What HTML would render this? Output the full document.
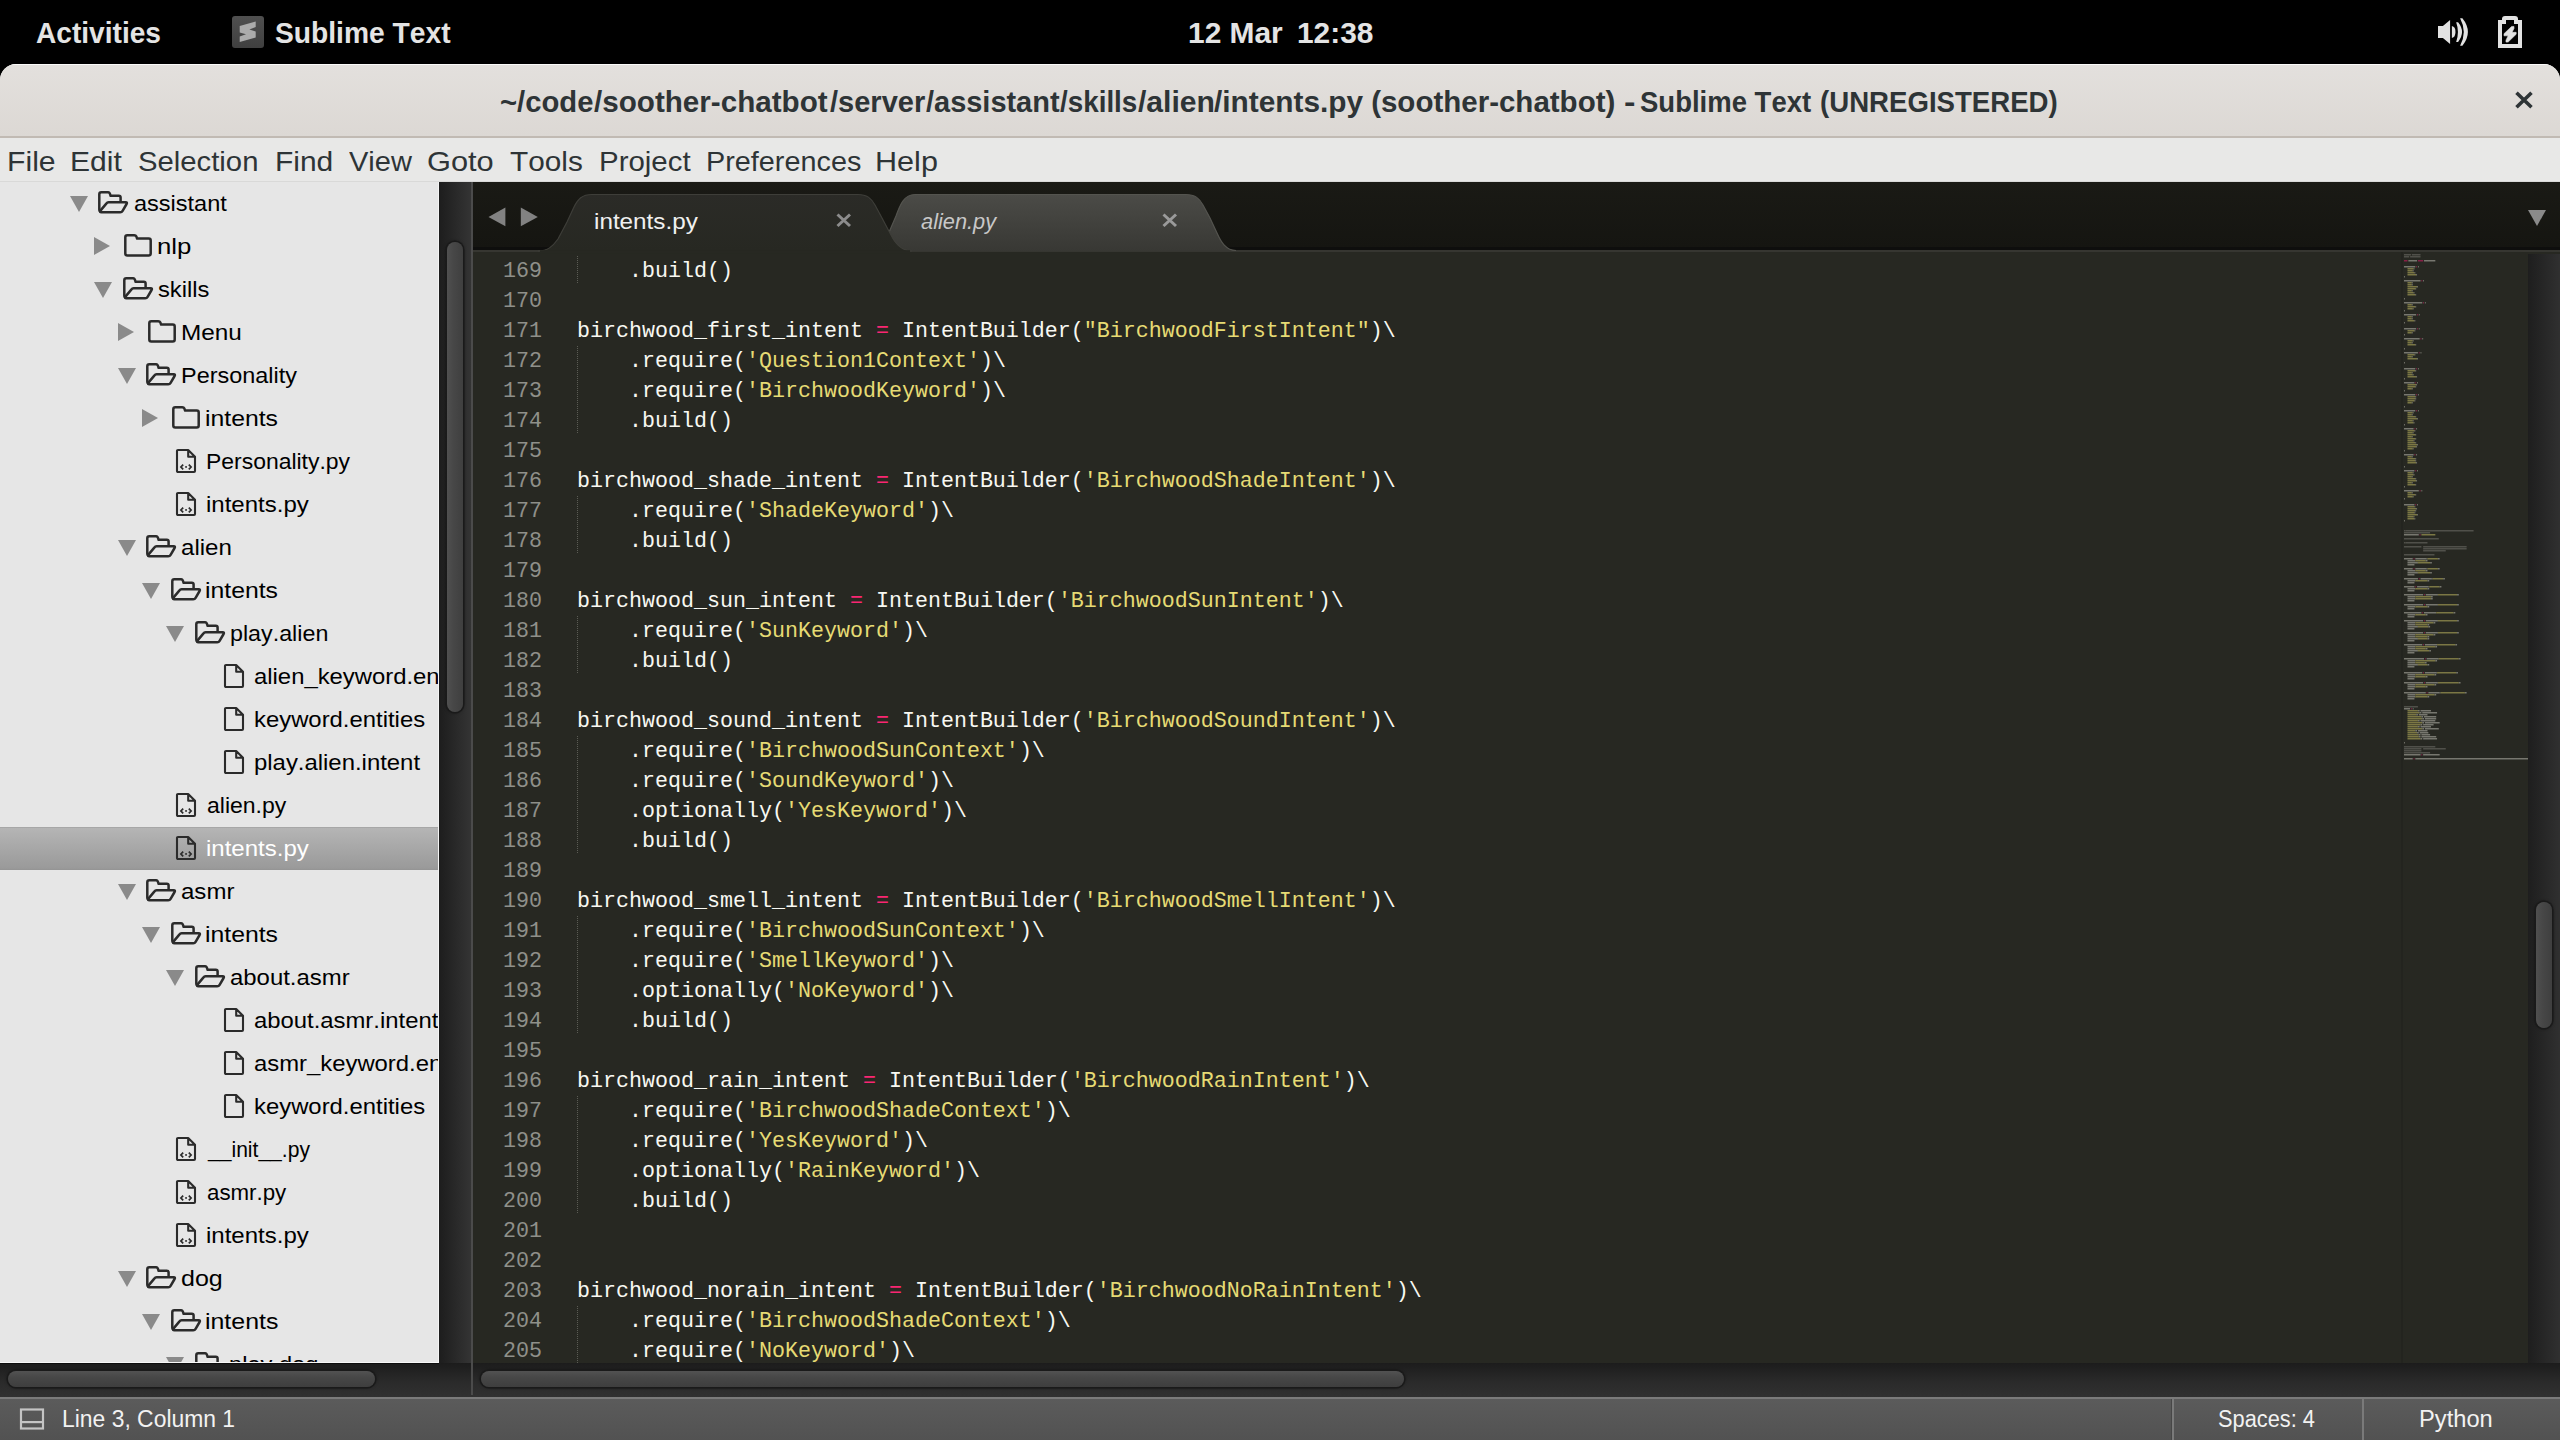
<!DOCTYPE html><html><head><meta charset="utf-8"><title>Sublime Text</title><style>

*{margin:0;padding:0;box-sizing:border-box}
html,body{width:2560px;height:1440px;overflow:hidden;background:#000}
body{position:relative;font-family:"Liberation Sans",sans-serif;font-kerning:none}
.t{position:absolute;white-space:pre;line-height:1;transform-origin:0 0;font-kerning:none}
.abs{position:absolute}
svg{position:absolute;overflow:visible}
#win{position:absolute;left:0;top:64px;width:2560px;height:1376px;border-radius:16px 16px 0 0;overflow:hidden;background:#e8e8e7}
#titlebar{position:absolute;left:0;top:0;width:2560px;height:72px;background:linear-gradient(#e3e0dd,#dcd8d4);border-top:1px solid #fbfaf9}
#tbline{position:absolute;left:0;top:72px;width:2560px;height:2px;background:#c1bab3}
#menubar{position:absolute;left:0;top:74px;width:2560px;height:44px;background:#e8e8e7;border-bottom:1px solid #d9d9d8}
#sidebar{position:absolute;left:0;top:182px;width:439px;height:1181px;background:#e6e6e6;overflow:hidden;border-right:1px solid #f4f4f4;border-bottom:1px solid #f8f8f8}
#sbcol{position:absolute;left:439px;top:182px;width:32px;height:1181px;background:linear-gradient(90deg,#1d1d1d,#262626 40%,#343434)}
#sep1{position:absolute;left:471px;top:182px;width:2px;height:1213px;background:#4b4b4b}
.thumbv{position:absolute;border-radius:8px;background:linear-gradient(90deg,#505050,#474747 40%,#3f3f3f);box-shadow:0 0 0 1.5px #1a1a1a,0 0 3px 1px rgba(0,0,0,.5)}
.thumbh{position:absolute;border-radius:8px;background:linear-gradient(#525252,#474747 40%,#3e3e3e);box-shadow:0 0 0 1.5px #1a1a1a,0 0 3px 1px rgba(0,0,0,.5)}
#tabbar{position:absolute;left:473px;top:182px;width:2087px;height:66px;background:linear-gradient(#1a1a15,#151511)}
#tabline1{position:absolute;left:473px;top:247px;width:2087px;height:3px;background:#0e0e0d}
#tabline2{position:absolute;left:473px;top:250px;width:2087px;height:2px;background:#363631}
#code{position:absolute;left:473px;top:252px;width:2087px;height:1111px;background:#272822;overflow:hidden}
#mmsep{position:absolute;left:2401px;top:252px;width:2px;height:1111px;background:#23241f}
#vscol{position:absolute;left:2528px;top:254px;width:32px;height:1109px;background:linear-gradient(90deg,#1e1e1e,#252525 40%,#303030)}
#bottom{position:absolute;left:0;top:1363px;width:2560px;height:34px;background:linear-gradient(#1c1c1c,#212121 20%,#2a2a2a 55%,#313131)}
#status{position:absolute;left:0;top:1397px;width:2560px;height:43px;background:linear-gradient(#7b7b7b,#7b7b7b 2px,#5b5b5b 2px,#525252)}
.ln{position:absolute;left:474px;width:67px;text-align:right;white-space:pre;font-family:"Liberation Mono",monospace;font-size:21.667px;line-height:1;color:#8f908a;transform:scaleY(1.05);transform-origin:0 16px}
.cl{position:absolute;left:577px;white-space:pre;font-family:"Liberation Mono",monospace;font-size:21.667px;line-height:1;color:#f8f8f2;transform:scaleY(1.05);transform-origin:0 16px}
.s{color:#e6db74}.o{color:#f92672}
.ig{position:absolute;left:577px;width:1px;background:repeating-linear-gradient(#5b5c55 0 1px,transparent 1px 2px)}

</style></head><body>
<svg style="left:232px;top:16px" width="32" height="32" viewBox="0 0 32 32"><defs><linearGradient id="ig1" x1="0" y1="0" x2="0" y2="1"><stop offset="0" stop-color="#505050"/><stop offset="1" stop-color="#404040"/></linearGradient></defs><rect x="0" y="0" width="32" height="32" rx="3" fill="url(#ig1)"/><path d="M7.7 9.9 L23.7 5.6 L23.7 11.1 L17.4 13.5 L23.7 15.4 L23.7 21.6 L7.7 26.1 L7.7 20.4 L14 18.2 L7.7 16.6 Z" fill="#ababab"/></svg>
<svg style="left:2436px;top:16px" width="34" height="32" viewBox="0 0 34 32"><path d="M2 10.06 H6.9 L14.1 4 V28 L6.9 21.98 H2 Z" fill="#e2e2e2"/><path d="M15.9 10.1 A4.1 6 0 0 1 15.9 22 Z" fill="#e2e2e2"/><path d="M20.17 6.35 L22.1 6.35 Q29.96 16.1 22.1 25.9 L20.17 25.9 Q23.7 16.1 20.17 6.35 Z" fill="#e2e2e2"/><path d="M24.1 2.25 L26.4 2.25 Q37.4 16 26.4 29.8 L24.1 29.8 Q31.5 16 24.1 2.25 Z" fill="#e2e2e2"/></svg>
<svg style="left:2496px;top:14px" width="28" height="36" viewBox="0 0 28 36"><path d="M4 8 H8 V5 Q8 4 9 4 H19 Q20 4 20 5 V8 H24 V32 H4 Z" stroke="#e2e2e2" stroke-width="4" fill="none" stroke-linejoin="miter"/><path d="M15.64 12.45 L17.98 12.45 L17.98 14.6 L16.03 18.3 L20.13 18.3 L20.13 20.27 L12.13 28.08 L9.98 28.08 L9.98 26.13 L12.13 21.83 L8.02 21.83 L8.02 19.68 Z" fill="#e2e2e2" stroke="#e2e2e2" stroke-width="0.6" stroke-linejoin="round"/></svg>
<span class="t" style="left:35.50px;top:18.00px;font-family:'Liberation Sans';font-weight:bold;font-size:30px;color:#e4e4e4;transform:scaleX(0.9368);">Activities</span>
<span class="t" style="left:275.19px;top:18.00px;font-family:'Liberation Sans';font-weight:bold;font-size:30px;color:#e4e4e4;transform:scaleX(0.9403);">Sublime Text</span>
<span class="t" style="left:1187.62px;top:18.00px;font-family:'Liberation Sans';font-weight:bold;font-size:30px;color:#e4e4e4;transform:scaleX(0.9967);">12 Mar</span>
<span class="t" style="left:1296.82px;top:18.00px;font-family:'Liberation Sans';font-weight:bold;font-size:30px;color:#e4e4e4;transform:scaleX(0.9957);">12:38</span>
<div id="win"><div id="titlebar"></div><div id="tbline"></div><div id="menubar"></div></div>
<span class="t" style="left:499.94px;top:87.00px;font-family:'Liberation Sans';font-weight:bold;font-size:29.5px;color:#2e3436;transform:scaleX(0.9913);">~/code</span>
<span class="t" style="left:593.61px;top:87.00px;font-family:'Liberation Sans';font-weight:bold;font-size:29.5px;color:#2e3436;transform:scaleX(1.0040);">/soother-chatbot</span>
<span class="t" style="left:829.62px;top:87.00px;font-family:'Liberation Sans';font-weight:bold;font-size:29.5px;color:#2e3436;transform:scaleX(0.9839);">/server</span>
<span class="t" style="left:926.22px;top:87.00px;font-family:'Liberation Sans';font-weight:bold;font-size:29.5px;color:#2e3436;transform:scaleX(0.9812);">/assistant</span>
<span class="t" style="left:1060.13px;top:87.00px;font-family:'Liberation Sans';font-weight:bold;font-size:29.5px;color:#2e3436;transform:scaleX(0.9428);">/skills</span>
<span class="t" style="left:1138.21px;top:87.00px;font-family:'Liberation Sans';font-weight:bold;font-size:29.5px;color:#2e3436;transform:scaleX(1.0204);">/alien</span>
<span class="t" style="left:1214.11px;top:87.00px;font-family:'Liberation Sans';font-weight:bold;font-size:29.5px;color:#2e3436;transform:scaleX(1.0111);">/intents.py</span>
<span class="t" style="left:1371.13px;top:87.00px;font-family:'Liberation Sans';font-weight:bold;font-size:29.5px;color:#2e3436;">(soother-chatbot)</span>
<span class="t" style="left:1623.65px;top:87.00px;font-family:'Liberation Sans';font-weight:bold;font-size:29.5px;color:#2e3436;transform:scaleX(1.1682);">-</span>
<span class="t" style="left:1640.46px;top:87.00px;font-family:'Liberation Sans';font-weight:bold;font-size:29.5px;color:#2e3436;transform:scaleX(0.9321);">Sublime Text</span>
<span class="t" style="left:1819.62px;top:87.00px;font-family:'Liberation Sans';font-weight:bold;font-size:29.5px;color:#2e3436;transform:scaleX(0.9359);">(UNREGISTERED)</span>
<svg style="left:2512px;top:88px" width="24" height="24" viewBox="0 0 24 24"><path d="M4.5 4.8 L19.5 19.2 M19.5 4.8 L4.5 19.2" stroke="#2e3436" stroke-width="3.6"/></svg>
<span class="t" style="left:7.13px;top:147.60px;font-family:'Liberation Sans';font-size:28px;color:#2e3436;transform:scaleX(1.0775);">File</span>
<span class="t" style="left:70.33px;top:147.60px;font-family:'Liberation Sans';font-size:28px;color:#2e3436;transform:scaleX(1.0733);">Edit</span>
<span class="t" style="left:138.37px;top:147.60px;font-family:'Liberation Sans';font-size:28px;color:#2e3436;transform:scaleX(1.0455);">Selection</span>
<span class="t" style="left:274.64px;top:147.60px;font-family:'Liberation Sans';font-size:28px;color:#2e3436;transform:scaleX(1.0701);">Find</span>
<span class="t" style="left:348.67px;top:147.60px;font-family:'Liberation Sans';font-size:28px;color:#2e3436;transform:scaleX(1.0357);">View</span>
<span class="t" style="left:427.35px;top:147.60px;font-family:'Liberation Sans';font-size:28px;color:#2e3436;transform:scaleX(1.0995);">Goto</span>
<span class="t" style="left:509.63px;top:147.60px;font-family:'Liberation Sans';font-size:28px;color:#2e3436;transform:scaleX(1.0639);">Tools</span>
<span class="t" style="left:598.58px;top:147.60px;font-family:'Liberation Sans';font-size:28px;color:#2e3436;transform:scaleX(1.0515);">Project</span>
<span class="t" style="left:705.54px;top:147.60px;font-family:'Liberation Sans';font-size:28px;color:#2e3436;transform:scaleX(1.0287);">Preferences</span>
<span class="t" style="left:875.19px;top:147.60px;font-family:'Liberation Sans';font-size:28px;color:#2e3436;transform:scaleX(1.0922);">Help</span>
<div id="sidebar"><div class="abs" style="left:0;top:-182px;width:439px;height:1440px">
<div class="abs" style="left:0;top:827px;width:439px;height:43px;background:linear-gradient(#a7a7a7,#a7a7a7 1px,#b5b5b5 1px,#9a9a9a 41px,#939393)"></div>
<svg style="left:69.5px;top:195.5px" width="18" height="16" viewBox="0 0 18 16"><path d="M0 0 H18 L9 16 Z" fill="#8a8a8a"/></svg>
<svg style="left:98.2px;top:190.8px" width="31" height="23" viewBox="0 0 31 23"><path d="M3.5 20.6 Q1.3 20.6 1.3 18.5 V3.2 Q1.3 1.2 3.3 1.2 H10.2 Q11.3 1.2 11.8 2.4 L12.6 4.8 H20.8 Q22.6 4.8 22.6 6.6 V11" stroke="#2b2b2b" stroke-width="2.5" fill="none" stroke-linejoin="round"/><path d="M10.6 11.2 H27.6 Q29.6 11.2 28.6 13 L24.6 19.8 Q23.8 21.3 22.2 21.3 H3.4 Q1.4 21.3 2.4 19.6 L8.3 12.6 Q9.2 11.2 10.6 11.2 Z" stroke="#2b2b2b" stroke-width="2.5" fill="none" stroke-linejoin="round"/></svg>
<svg style="left:93.9px;top:237px" width="16" height="18" viewBox="0 0 16 18"><path d="M0 0 V18 L16 9 Z" fill="#8a8a8a"/></svg>
<svg style="left:123.9px;top:233.7px" width="28" height="23" viewBox="0 0 28 23"><path d="M1.3 3.2 Q1.3 1.2 3.3 1.2 H10.2 Q11.8 1.2 12.4 2.6 L13.1 4.6 H24.7 Q26.7 4.6 26.7 6.6 V19.4 Q26.7 21.4 24.7 21.4 H3.3 Q1.3 21.4 1.3 19.4 Z" stroke="#2b2b2b" stroke-width="2.5" fill="none" stroke-linejoin="round"/></svg>
<svg style="left:93.9px;top:281.5px" width="18" height="16" viewBox="0 0 18 16"><path d="M0 0 H18 L9 16 Z" fill="#8a8a8a"/></svg>
<svg style="left:122.6px;top:276.8px" width="31" height="23" viewBox="0 0 31 23"><path d="M3.5 20.6 Q1.3 20.6 1.3 18.5 V3.2 Q1.3 1.2 3.3 1.2 H10.2 Q11.3 1.2 11.8 2.4 L12.6 4.8 H20.8 Q22.6 4.8 22.6 6.6 V11" stroke="#2b2b2b" stroke-width="2.5" fill="none" stroke-linejoin="round"/><path d="M10.6 11.2 H27.6 Q29.6 11.2 28.6 13 L24.6 19.8 Q23.8 21.3 22.2 21.3 H3.4 Q1.4 21.3 2.4 19.6 L8.3 12.6 Q9.2 11.2 10.6 11.2 Z" stroke="#2b2b2b" stroke-width="2.5" fill="none" stroke-linejoin="round"/></svg>
<svg style="left:118.3px;top:323px" width="16" height="18" viewBox="0 0 16 18"><path d="M0 0 V18 L16 9 Z" fill="#8a8a8a"/></svg>
<svg style="left:148.3px;top:319.7px" width="28" height="23" viewBox="0 0 28 23"><path d="M1.3 3.2 Q1.3 1.2 3.3 1.2 H10.2 Q11.8 1.2 12.4 2.6 L13.1 4.6 H24.7 Q26.7 4.6 26.7 6.6 V19.4 Q26.7 21.4 24.7 21.4 H3.3 Q1.3 21.4 1.3 19.4 Z" stroke="#2b2b2b" stroke-width="2.5" fill="none" stroke-linejoin="round"/></svg>
<svg style="left:117.5px;top:367.5px" width="18" height="16" viewBox="0 0 18 16"><path d="M0 0 H18 L9 16 Z" fill="#8a8a8a"/></svg>
<svg style="left:146.2px;top:362.8px" width="31" height="23" viewBox="0 0 31 23"><path d="M3.5 20.6 Q1.3 20.6 1.3 18.5 V3.2 Q1.3 1.2 3.3 1.2 H10.2 Q11.3 1.2 11.8 2.4 L12.6 4.8 H20.8 Q22.6 4.8 22.6 6.6 V11" stroke="#2b2b2b" stroke-width="2.5" fill="none" stroke-linejoin="round"/><path d="M10.6 11.2 H27.6 Q29.6 11.2 28.6 13 L24.6 19.8 Q23.8 21.3 22.2 21.3 H3.4 Q1.4 21.3 2.4 19.6 L8.3 12.6 Q9.2 11.2 10.6 11.2 Z" stroke="#2b2b2b" stroke-width="2.5" fill="none" stroke-linejoin="round"/></svg>
<svg style="left:142.0px;top:409px" width="16" height="18" viewBox="0 0 16 18"><path d="M0 0 V18 L16 9 Z" fill="#8a8a8a"/></svg>
<svg style="left:172.0px;top:405.7px" width="28" height="23" viewBox="0 0 28 23"><path d="M1.3 3.2 Q1.3 1.2 3.3 1.2 H10.2 Q11.8 1.2 12.4 2.6 L13.1 4.6 H24.7 Q26.7 4.6 26.7 6.6 V19.4 Q26.7 21.4 24.7 21.4 H3.3 Q1.3 21.4 1.3 19.4 Z" stroke="#2b2b2b" stroke-width="2.5" fill="none" stroke-linejoin="round"/></svg>
<svg style="left:175.3px;top:448px" width="22" height="26" viewBox="0 0 22 26"><path d="M2 3 Q2 2 3 2 H13.2 L20 8.8 V23 Q20 24 19 24 H3 Q2 24 2 23 Z M13.2 2 V8.8 H20" stroke="#2b2b2b" stroke-width="2.1" fill="none" stroke-linejoin="round"/><path d="M8.2 16.6 L5.9 19 L8.2 21.4 M13.8 16.6 L16.1 19 L13.8 21.4" stroke="#2b2b2b" stroke-width="1.7" fill="none"/><rect x="10.2" y="18.1" width="1.7" height="1.7" fill="#2b2b2b"/></svg>
<svg style="left:175.1px;top:491px" width="22" height="26" viewBox="0 0 22 26"><path d="M2 3 Q2 2 3 2 H13.2 L20 8.8 V23 Q20 24 19 24 H3 Q2 24 2 23 Z M13.2 2 V8.8 H20" stroke="#2b2b2b" stroke-width="2.1" fill="none" stroke-linejoin="round"/><path d="M8.2 16.6 L5.9 19 L8.2 21.4 M13.8 16.6 L16.1 19 L13.8 21.4" stroke="#2b2b2b" stroke-width="1.7" fill="none"/><rect x="10.2" y="18.1" width="1.7" height="1.7" fill="#2b2b2b"/></svg>
<svg style="left:117.5px;top:539.5px" width="18" height="16" viewBox="0 0 18 16"><path d="M0 0 H18 L9 16 Z" fill="#8a8a8a"/></svg>
<svg style="left:146.2px;top:534.8px" width="31" height="23" viewBox="0 0 31 23"><path d="M3.5 20.6 Q1.3 20.6 1.3 18.5 V3.2 Q1.3 1.2 3.3 1.2 H10.2 Q11.3 1.2 11.8 2.4 L12.6 4.8 H20.8 Q22.6 4.8 22.6 6.6 V11" stroke="#2b2b2b" stroke-width="2.5" fill="none" stroke-linejoin="round"/><path d="M10.6 11.2 H27.6 Q29.6 11.2 28.6 13 L24.6 19.8 Q23.8 21.3 22.2 21.3 H3.4 Q1.4 21.3 2.4 19.6 L8.3 12.6 Q9.2 11.2 10.6 11.2 Z" stroke="#2b2b2b" stroke-width="2.5" fill="none" stroke-linejoin="round"/></svg>
<svg style="left:142.0px;top:582.5px" width="18" height="16" viewBox="0 0 18 16"><path d="M0 0 H18 L9 16 Z" fill="#8a8a8a"/></svg>
<svg style="left:170.7px;top:577.8px" width="31" height="23" viewBox="0 0 31 23"><path d="M3.5 20.6 Q1.3 20.6 1.3 18.5 V3.2 Q1.3 1.2 3.3 1.2 H10.2 Q11.3 1.2 11.8 2.4 L12.6 4.8 H20.8 Q22.6 4.8 22.6 6.6 V11" stroke="#2b2b2b" stroke-width="2.5" fill="none" stroke-linejoin="round"/><path d="M10.6 11.2 H27.6 Q29.6 11.2 28.6 13 L24.6 19.8 Q23.8 21.3 22.2 21.3 H3.4 Q1.4 21.3 2.4 19.6 L8.3 12.6 Q9.2 11.2 10.6 11.2 Z" stroke="#2b2b2b" stroke-width="2.5" fill="none" stroke-linejoin="round"/></svg>
<svg style="left:166.0px;top:625.5px" width="18" height="16" viewBox="0 0 18 16"><path d="M0 0 H18 L9 16 Z" fill="#8a8a8a"/></svg>
<svg style="left:194.7px;top:620.8px" width="31" height="23" viewBox="0 0 31 23"><path d="M3.5 20.6 Q1.3 20.6 1.3 18.5 V3.2 Q1.3 1.2 3.3 1.2 H10.2 Q11.3 1.2 11.8 2.4 L12.6 4.8 H20.8 Q22.6 4.8 22.6 6.6 V11" stroke="#2b2b2b" stroke-width="2.5" fill="none" stroke-linejoin="round"/><path d="M10.6 11.2 H27.6 Q29.6 11.2 28.6 13 L24.6 19.8 Q23.8 21.3 22.2 21.3 H3.4 Q1.4 21.3 2.4 19.6 L8.3 12.6 Q9.2 11.2 10.6 11.2 Z" stroke="#2b2b2b" stroke-width="2.5" fill="none" stroke-linejoin="round"/></svg>
<svg style="left:222.8px;top:663px" width="22" height="26" viewBox="0 0 22 26"><path d="M2 3 Q2 2 3 2 H13.2 L20 8.8 V23 Q20 24 19 24 H3 Q2 24 2 23 Z M13.2 2 V8.8 H20" stroke="#2b2b2b" stroke-width="2.1" fill="none" stroke-linejoin="round"/></svg>
<svg style="left:222.8px;top:706px" width="22" height="26" viewBox="0 0 22 26"><path d="M2 3 Q2 2 3 2 H13.2 L20 8.8 V23 Q20 24 19 24 H3 Q2 24 2 23 Z M13.2 2 V8.8 H20" stroke="#2b2b2b" stroke-width="2.1" fill="none" stroke-linejoin="round"/></svg>
<svg style="left:222.8px;top:749px" width="22" height="26" viewBox="0 0 22 26"><path d="M2 3 Q2 2 3 2 H13.2 L20 8.8 V23 Q20 24 19 24 H3 Q2 24 2 23 Z M13.2 2 V8.8 H20" stroke="#2b2b2b" stroke-width="2.1" fill="none" stroke-linejoin="round"/></svg>
<svg style="left:175.1px;top:792px" width="22" height="26" viewBox="0 0 22 26"><path d="M2 3 Q2 2 3 2 H13.2 L20 8.8 V23 Q20 24 19 24 H3 Q2 24 2 23 Z M13.2 2 V8.8 H20" stroke="#2b2b2b" stroke-width="2.1" fill="none" stroke-linejoin="round"/><path d="M8.2 16.6 L5.9 19 L8.2 21.4 M13.8 16.6 L16.1 19 L13.8 21.4" stroke="#2b2b2b" stroke-width="1.7" fill="none"/><rect x="10.2" y="18.1" width="1.7" height="1.7" fill="#2b2b2b"/></svg>
<svg style="left:175.1px;top:835px" width="22" height="26" viewBox="0 0 22 26"><path d="M2 3 Q2 2 3 2 H13.2 L20 8.8 V23 Q20 24 19 24 H3 Q2 24 2 23 Z M13.2 2 V8.8 H20" stroke="#2b2b2b" stroke-width="2.1" fill="none" stroke-linejoin="round"/><path d="M8.2 16.6 L5.9 19 L8.2 21.4 M13.8 16.6 L16.1 19 L13.8 21.4" stroke="#2b2b2b" stroke-width="1.7" fill="none"/><rect x="10.2" y="18.1" width="1.7" height="1.7" fill="#2b2b2b"/></svg>
<svg style="left:117.5px;top:883.5px" width="18" height="16" viewBox="0 0 18 16"><path d="M0 0 H18 L9 16 Z" fill="#8a8a8a"/></svg>
<svg style="left:146.2px;top:878.8px" width="31" height="23" viewBox="0 0 31 23"><path d="M3.5 20.6 Q1.3 20.6 1.3 18.5 V3.2 Q1.3 1.2 3.3 1.2 H10.2 Q11.3 1.2 11.8 2.4 L12.6 4.8 H20.8 Q22.6 4.8 22.6 6.6 V11" stroke="#2b2b2b" stroke-width="2.5" fill="none" stroke-linejoin="round"/><path d="M10.6 11.2 H27.6 Q29.6 11.2 28.6 13 L24.6 19.8 Q23.8 21.3 22.2 21.3 H3.4 Q1.4 21.3 2.4 19.6 L8.3 12.6 Q9.2 11.2 10.6 11.2 Z" stroke="#2b2b2b" stroke-width="2.5" fill="none" stroke-linejoin="round"/></svg>
<svg style="left:142.0px;top:926.5px" width="18" height="16" viewBox="0 0 18 16"><path d="M0 0 H18 L9 16 Z" fill="#8a8a8a"/></svg>
<svg style="left:170.7px;top:921.8px" width="31" height="23" viewBox="0 0 31 23"><path d="M3.5 20.6 Q1.3 20.6 1.3 18.5 V3.2 Q1.3 1.2 3.3 1.2 H10.2 Q11.3 1.2 11.8 2.4 L12.6 4.8 H20.8 Q22.6 4.8 22.6 6.6 V11" stroke="#2b2b2b" stroke-width="2.5" fill="none" stroke-linejoin="round"/><path d="M10.6 11.2 H27.6 Q29.6 11.2 28.6 13 L24.6 19.8 Q23.8 21.3 22.2 21.3 H3.4 Q1.4 21.3 2.4 19.6 L8.3 12.6 Q9.2 11.2 10.6 11.2 Z" stroke="#2b2b2b" stroke-width="2.5" fill="none" stroke-linejoin="round"/></svg>
<svg style="left:166.0px;top:969.5px" width="18" height="16" viewBox="0 0 18 16"><path d="M0 0 H18 L9 16 Z" fill="#8a8a8a"/></svg>
<svg style="left:194.7px;top:964.8px" width="31" height="23" viewBox="0 0 31 23"><path d="M3.5 20.6 Q1.3 20.6 1.3 18.5 V3.2 Q1.3 1.2 3.3 1.2 H10.2 Q11.3 1.2 11.8 2.4 L12.6 4.8 H20.8 Q22.6 4.8 22.6 6.6 V11" stroke="#2b2b2b" stroke-width="2.5" fill="none" stroke-linejoin="round"/><path d="M10.6 11.2 H27.6 Q29.6 11.2 28.6 13 L24.6 19.8 Q23.8 21.3 22.2 21.3 H3.4 Q1.4 21.3 2.4 19.6 L8.3 12.6 Q9.2 11.2 10.6 11.2 Z" stroke="#2b2b2b" stroke-width="2.5" fill="none" stroke-linejoin="round"/></svg>
<svg style="left:222.8px;top:1007px" width="22" height="26" viewBox="0 0 22 26"><path d="M2 3 Q2 2 3 2 H13.2 L20 8.8 V23 Q20 24 19 24 H3 Q2 24 2 23 Z M13.2 2 V8.8 H20" stroke="#2b2b2b" stroke-width="2.1" fill="none" stroke-linejoin="round"/></svg>
<svg style="left:222.8px;top:1050px" width="22" height="26" viewBox="0 0 22 26"><path d="M2 3 Q2 2 3 2 H13.2 L20 8.8 V23 Q20 24 19 24 H3 Q2 24 2 23 Z M13.2 2 V8.8 H20" stroke="#2b2b2b" stroke-width="2.1" fill="none" stroke-linejoin="round"/></svg>
<svg style="left:222.8px;top:1093px" width="22" height="26" viewBox="0 0 22 26"><path d="M2 3 Q2 2 3 2 H13.2 L20 8.8 V23 Q20 24 19 24 H3 Q2 24 2 23 Z M13.2 2 V8.8 H20" stroke="#2b2b2b" stroke-width="2.1" fill="none" stroke-linejoin="round"/></svg>
<svg style="left:175.1px;top:1136px" width="22" height="26" viewBox="0 0 22 26"><path d="M2 3 Q2 2 3 2 H13.2 L20 8.8 V23 Q20 24 19 24 H3 Q2 24 2 23 Z M13.2 2 V8.8 H20" stroke="#2b2b2b" stroke-width="2.1" fill="none" stroke-linejoin="round"/><path d="M8.2 16.6 L5.9 19 L8.2 21.4 M13.8 16.6 L16.1 19 L13.8 21.4" stroke="#2b2b2b" stroke-width="1.7" fill="none"/><rect x="10.2" y="18.1" width="1.7" height="1.7" fill="#2b2b2b"/></svg>
<svg style="left:175.1px;top:1179px" width="22" height="26" viewBox="0 0 22 26"><path d="M2 3 Q2 2 3 2 H13.2 L20 8.8 V23 Q20 24 19 24 H3 Q2 24 2 23 Z M13.2 2 V8.8 H20" stroke="#2b2b2b" stroke-width="2.1" fill="none" stroke-linejoin="round"/><path d="M8.2 16.6 L5.9 19 L8.2 21.4 M13.8 16.6 L16.1 19 L13.8 21.4" stroke="#2b2b2b" stroke-width="1.7" fill="none"/><rect x="10.2" y="18.1" width="1.7" height="1.7" fill="#2b2b2b"/></svg>
<svg style="left:175.1px;top:1222px" width="22" height="26" viewBox="0 0 22 26"><path d="M2 3 Q2 2 3 2 H13.2 L20 8.8 V23 Q20 24 19 24 H3 Q2 24 2 23 Z M13.2 2 V8.8 H20" stroke="#2b2b2b" stroke-width="2.1" fill="none" stroke-linejoin="round"/><path d="M8.2 16.6 L5.9 19 L8.2 21.4 M13.8 16.6 L16.1 19 L13.8 21.4" stroke="#2b2b2b" stroke-width="1.7" fill="none"/><rect x="10.2" y="18.1" width="1.7" height="1.7" fill="#2b2b2b"/></svg>
<svg style="left:117.5px;top:1270.5px" width="18" height="16" viewBox="0 0 18 16"><path d="M0 0 H18 L9 16 Z" fill="#8a8a8a"/></svg>
<svg style="left:146.2px;top:1265.8px" width="31" height="23" viewBox="0 0 31 23"><path d="M3.5 20.6 Q1.3 20.6 1.3 18.5 V3.2 Q1.3 1.2 3.3 1.2 H10.2 Q11.3 1.2 11.8 2.4 L12.6 4.8 H20.8 Q22.6 4.8 22.6 6.6 V11" stroke="#2b2b2b" stroke-width="2.5" fill="none" stroke-linejoin="round"/><path d="M10.6 11.2 H27.6 Q29.6 11.2 28.6 13 L24.6 19.8 Q23.8 21.3 22.2 21.3 H3.4 Q1.4 21.3 2.4 19.6 L8.3 12.6 Q9.2 11.2 10.6 11.2 Z" stroke="#2b2b2b" stroke-width="2.5" fill="none" stroke-linejoin="round"/></svg>
<svg style="left:142.0px;top:1313.5px" width="18" height="16" viewBox="0 0 18 16"><path d="M0 0 H18 L9 16 Z" fill="#8a8a8a"/></svg>
<svg style="left:170.7px;top:1308.8px" width="31" height="23" viewBox="0 0 31 23"><path d="M3.5 20.6 Q1.3 20.6 1.3 18.5 V3.2 Q1.3 1.2 3.3 1.2 H10.2 Q11.3 1.2 11.8 2.4 L12.6 4.8 H20.8 Q22.6 4.8 22.6 6.6 V11" stroke="#2b2b2b" stroke-width="2.5" fill="none" stroke-linejoin="round"/><path d="M10.6 11.2 H27.6 Q29.6 11.2 28.6 13 L24.6 19.8 Q23.8 21.3 22.2 21.3 H3.4 Q1.4 21.3 2.4 19.6 L8.3 12.6 Q9.2 11.2 10.6 11.2 Z" stroke="#2b2b2b" stroke-width="2.5" fill="none" stroke-linejoin="round"/></svg>
<svg style="left:166.0px;top:1356.5px" width="18" height="16" viewBox="0 0 18 16"><path d="M0 0 H18 L9 16 Z" fill="#8a8a8a"/></svg>
<svg style="left:194.7px;top:1351.8px" width="31" height="23" viewBox="0 0 31 23"><path d="M3.5 20.6 Q1.3 20.6 1.3 18.5 V3.2 Q1.3 1.2 3.3 1.2 H10.2 Q11.3 1.2 11.8 2.4 L12.6 4.8 H20.8 Q22.6 4.8 22.6 6.6 V11" stroke="#2b2b2b" stroke-width="2.5" fill="none" stroke-linejoin="round"/><path d="M10.6 11.2 H27.6 Q29.6 11.2 28.6 13 L24.6 19.8 Q23.8 21.3 22.2 21.3 H3.4 Q1.4 21.3 2.4 19.6 L8.3 12.6 Q9.2 11.2 10.6 11.2 Z" stroke="#2b2b2b" stroke-width="2.5" fill="none" stroke-linejoin="round"/></svg>
<span class="t" style="left:133.50px;top:193.00px;font-family:'Liberation Sans';font-size:22.2px;color:#000;transform:scaleX(1.0601);">assistant</span>
<span class="t" style="left:157.19px;top:236.00px;font-family:'Liberation Sans';font-size:22.2px;color:#000;transform:scaleX(1.1610);">nlp</span>
<span class="t" style="left:158.24px;top:279.00px;font-family:'Liberation Sans';font-size:22.2px;color:#000;transform:scaleX(1.0691);">skills</span>
<span class="t" style="left:181.30px;top:322.00px;font-family:'Liberation Sans';font-size:22.2px;color:#000;transform:scaleX(1.0969);">Menu</span>
<span class="t" style="left:180.58px;top:365.00px;font-family:'Liberation Sans';font-size:22.2px;color:#000;transform:scaleX(1.0560);">Personality</span>
<span class="t" style="left:205.34px;top:408.00px;font-family:'Liberation Sans';font-size:22.2px;color:#000;transform:scaleX(1.1169);">intents</span>
<span class="t" style="left:205.82px;top:451.00px;font-family:'Liberation Sans';font-size:22.2px;color:#000;transform:scaleX(1.0337);">Personality.py</span>
<span class="t" style="left:205.89px;top:494.00px;font-family:'Liberation Sans';font-size:22.2px;color:#000;transform:scaleX(1.0824);">intents.py</span>
<span class="t" style="left:181.48px;top:537.00px;font-family:'Liberation Sans';font-size:22.2px;color:#000;transform:scaleX(1.0849);">alien</span>
<span class="t" style="left:205.34px;top:580.00px;font-family:'Liberation Sans';font-size:22.2px;color:#000;transform:scaleX(1.1169);">intents</span>
<span class="t" style="left:229.50px;top:623.00px;font-family:'Liberation Sans';font-size:22.2px;color:#000;transform:scaleX(1.0492);">play.alien</span>
<span class="t" style="left:254.19px;top:666.00px;font-family:'Liberation Sans';font-size:22.2px;color:#000;transform:scaleX(1.0750);">alien_keyword.entities</span>
<span class="t" style="left:253.59px;top:709.00px;font-family:'Liberation Sans';font-size:22.2px;color:#000;transform:scaleX(1.0754);">keyword.entities</span>
<span class="t" style="left:253.66px;top:752.00px;font-family:'Liberation Sans';font-size:22.2px;color:#000;transform:scaleX(1.0768);">play.alien.intent</span>
<span class="t" style="left:206.52px;top:795.00px;font-family:'Liberation Sans';font-size:22.2px;color:#000;transform:scaleX(1.0366);">alien.py</span>
<span class="t" style="left:205.89px;top:838.00px;font-family:'Liberation Sans';font-size:22.2px;color:#fff;transform:scaleX(1.0824);">intents.py</span>
<span class="t" style="left:181.48px;top:881.00px;font-family:'Liberation Sans';font-size:22.2px;color:#000;transform:scaleX(1.0829);">asmr</span>
<span class="t" style="left:205.34px;top:924.00px;font-family:'Liberation Sans';font-size:22.2px;color:#000;transform:scaleX(1.1169);">intents</span>
<span class="t" style="left:229.98px;top:967.00px;font-family:'Liberation Sans';font-size:22.2px;color:#000;transform:scaleX(1.0780);">about.asmr</span>
<span class="t" style="left:254.19px;top:1010.00px;font-family:'Liberation Sans';font-size:22.2px;color:#000;transform:scaleX(1.0750);">about.asmr.intent</span>
<span class="t" style="left:254.19px;top:1053.00px;font-family:'Liberation Sans';font-size:22.2px;color:#000;transform:scaleX(1.0750);">asmr_keyword.entities</span>
<span class="t" style="left:253.59px;top:1096.00px;font-family:'Liberation Sans';font-size:22.2px;color:#000;transform:scaleX(1.0754);">keyword.entities</span>
<span class="t" style="left:207.82px;top:1139.00px;font-family:'Liberation Sans';font-size:22.2px;color:#000;transform:scaleX(0.9501);">__init__.py</span>
<span class="t" style="left:206.55px;top:1182.00px;font-family:'Liberation Sans';font-size:22.2px;color:#000;transform:scaleX(1.0044);">asmr.py</span>
<span class="t" style="left:205.89px;top:1225.00px;font-family:'Liberation Sans';font-size:22.2px;color:#000;transform:scaleX(1.0824);">intents.py</span>
<span class="t" style="left:181.45px;top:1268.00px;font-family:'Liberation Sans';font-size:22.2px;color:#000;transform:scaleX(1.1276);">dog</span>
<span class="t" style="left:205.33px;top:1311.00px;font-family:'Liberation Sans';font-size:22.2px;color:#000;transform:scaleX(1.1217);">intents</span>
<span class="t" style="left:229.48px;top:1354.00px;font-family:'Liberation Sans';font-size:22.2px;color:#000;transform:scaleX(1.0657);">play.dog</span>
</div></div>
<div id="sbcol"></div><div id="sep1"></div>
<div class="thumbv" style="left:447px;top:242px;width:16px;height:470px"></div>
<div id="tabbar"></div><div id="tabline1"></div><div id="tabline2"></div>
<div id="code"></div>
<svg style="left:0;top:0" width="2560" height="260" viewBox="0 0 2560 260"><defs><linearGradient id="tg2" x1="0" y1="0" x2="0" y2="1"><stop offset="0" stop-color="#4b4b47"/><stop offset="1" stop-color="#383834"/></linearGradient><linearGradient id="tg1" x1="0" y1="0" x2="0" y2="1"><stop offset="0" stop-color="#2b2b27"/><stop offset="1" stop-color="#272822"/></linearGradient></defs><path d="M872 251 C880 251 884 244 887 237 L896 216 C900 205 904 194.5 915 194.5 L1186 194.5 C1195 194.5 1199 198 1203 205 L1210 218 L1217 233 C1221 242 1226 250.5 1236 250.5" fill="url(#tg2)" stroke="#54544f" stroke-width="1.2"/><path d="M538 251 C548 251 553 246 558 239 L567 222 L574 207 C578 199 582 194.5 592 194.5 L858 194.5 C867 194.5 871 198 875 205 L882 218 L891 235 C895 243 901 251 912 251" fill="url(#tg1)" stroke="#3e3e39" stroke-width="1.2"/><rect x="540" y="250.2" width="370" height="3" fill="#272822"/><path d="M488.5 216.9 L505.4 207.5 V226.3 Z" fill="#828282"/><path d="M537.8 216.9 L520.8 207.5 V226.3 Z" fill="#828282"/><path d="M2528 210 H2546 L2537 226 Z" fill="#8a8a8a"/><path d="M837.5 214.5 L850 226 M850 214.5 L837.5 226" stroke="#8c8c8c" stroke-width="3"/><path d="M1163.5 214.5 L1176 226 M1176 214.5 L1163.5 226" stroke="#9a9a9a" stroke-width="3"/></svg>
<span class="t" style="left:593.78px;top:210.50px;font-family:'Liberation Sans';font-size:22.2px;color:#f0f0f0;transform:scaleX(1.0931);">intents.py</span>
<span class="t" style="left:921.21px;top:210.50px;font-family:'Liberation Sans';font-style:italic;font-size:22.2px;color:#c8c8c8;transform:scaleX(0.9827);">alien.py</span>
<div class="ln" style="top:261px;width:68px">169</div>
<div class="cl" style="top:261px">    .build()</div>
<div class="ln" style="top:291px;width:68px">170</div>
<div class="ln" style="top:321px;width:68px">171</div>
<div class="cl" style="top:321px">birchwood_first_intent <span class="o">=</span> IntentBuilder(<span class="s">"BirchwoodFirstIntent"</span>)\</div>
<div class="ln" style="top:351px;width:68px">172</div>
<div class="cl" style="top:351px">    .require(<span class="s">'Question1Context'</span>)\</div>
<div class="ln" style="top:381px;width:68px">173</div>
<div class="cl" style="top:381px">    .require(<span class="s">'BirchwoodKeyword'</span>)\</div>
<div class="ln" style="top:411px;width:68px">174</div>
<div class="cl" style="top:411px">    .build()</div>
<div class="ln" style="top:441px;width:68px">175</div>
<div class="ln" style="top:471px;width:68px">176</div>
<div class="cl" style="top:471px">birchwood_shade_intent <span class="o">=</span> IntentBuilder(<span class="s">'BirchwoodShadeIntent'</span>)\</div>
<div class="ln" style="top:501px;width:68px">177</div>
<div class="cl" style="top:501px">    .require(<span class="s">'ShadeKeyword'</span>)\</div>
<div class="ln" style="top:531px;width:68px">178</div>
<div class="cl" style="top:531px">    .build()</div>
<div class="ln" style="top:561px;width:68px">179</div>
<div class="ln" style="top:591px;width:68px">180</div>
<div class="cl" style="top:591px">birchwood_sun_intent <span class="o">=</span> IntentBuilder(<span class="s">'BirchwoodSunIntent'</span>)\</div>
<div class="ln" style="top:621px;width:68px">181</div>
<div class="cl" style="top:621px">    .require(<span class="s">'SunKeyword'</span>)\</div>
<div class="ln" style="top:651px;width:68px">182</div>
<div class="cl" style="top:651px">    .build()</div>
<div class="ln" style="top:681px;width:68px">183</div>
<div class="ln" style="top:711px;width:68px">184</div>
<div class="cl" style="top:711px">birchwood_sound_intent <span class="o">=</span> IntentBuilder(<span class="s">'BirchwoodSoundIntent'</span>)\</div>
<div class="ln" style="top:741px;width:68px">185</div>
<div class="cl" style="top:741px">    .require(<span class="s">'BirchwoodSunContext'</span>)\</div>
<div class="ln" style="top:771px;width:68px">186</div>
<div class="cl" style="top:771px">    .require(<span class="s">'SoundKeyword'</span>)\</div>
<div class="ln" style="top:801px;width:68px">187</div>
<div class="cl" style="top:801px">    .optionally(<span class="s">'YesKeyword'</span>)\</div>
<div class="ln" style="top:831px;width:68px">188</div>
<div class="cl" style="top:831px">    .build()</div>
<div class="ln" style="top:861px;width:68px">189</div>
<div class="ln" style="top:891px;width:68px">190</div>
<div class="cl" style="top:891px">birchwood_smell_intent <span class="o">=</span> IntentBuilder(<span class="s">'BirchwoodSmellIntent'</span>)\</div>
<div class="ln" style="top:921px;width:68px">191</div>
<div class="cl" style="top:921px">    .require(<span class="s">'BirchwoodSunContext'</span>)\</div>
<div class="ln" style="top:951px;width:68px">192</div>
<div class="cl" style="top:951px">    .require(<span class="s">'SmellKeyword'</span>)\</div>
<div class="ln" style="top:981px;width:68px">193</div>
<div class="cl" style="top:981px">    .optionally(<span class="s">'NoKeyword'</span>)\</div>
<div class="ln" style="top:1011px;width:68px">194</div>
<div class="cl" style="top:1011px">    .build()</div>
<div class="ln" style="top:1041px;width:68px">195</div>
<div class="ln" style="top:1071px;width:68px">196</div>
<div class="cl" style="top:1071px">birchwood_rain_intent <span class="o">=</span> IntentBuilder(<span class="s">'BirchwoodRainIntent'</span>)\</div>
<div class="ln" style="top:1101px;width:68px">197</div>
<div class="cl" style="top:1101px">    .require(<span class="s">'BirchwoodShadeContext'</span>)\</div>
<div class="ln" style="top:1131px;width:68px">198</div>
<div class="cl" style="top:1131px">    .require(<span class="s">'YesKeyword'</span>)\</div>
<div class="ln" style="top:1161px;width:68px">199</div>
<div class="cl" style="top:1161px">    .optionally(<span class="s">'RainKeyword'</span>)\</div>
<div class="ln" style="top:1191px;width:68px">200</div>
<div class="cl" style="top:1191px">    .build()</div>
<div class="ln" style="top:1221px;width:68px">201</div>
<div class="ln" style="top:1251px;width:68px">202</div>
<div class="ln" style="top:1281px;width:68px">203</div>
<div class="cl" style="top:1281px">birchwood_norain_intent <span class="o">=</span> IntentBuilder(<span class="s">'BirchwoodNoRainIntent'</span>)\</div>
<div class="ln" style="top:1311px;width:68px">204</div>
<div class="cl" style="top:1311px">    .require(<span class="s">'BirchwoodShadeContext'</span>)\</div>
<div class="ln" style="top:1341px;width:68px">205</div>
<div class="cl" style="top:1341px">    .require(<span class="s">'NoKeyword'</span>)\</div>
<div class="ig" style="top:256px;height:27px"></div>
<div class="ig" style="top:346px;height:87px"></div>
<div class="ig" style="top:496px;height:57px"></div>
<div class="ig" style="top:616px;height:57px"></div>
<div class="ig" style="top:736px;height:117px"></div>
<div class="ig" style="top:916px;height:117px"></div>
<div class="ig" style="top:1096px;height:117px"></div>
<div class="ig" style="top:1306px;height:57px"></div>
<div id="mmsep"></div>
<svg style="left:2401px;top:252px" width="127" height="600" viewBox="0 0 127 600"><rect x="3.00" y="2" width="6.96" height="1.5" fill="#50504a"/><rect x="10.83" y="2" width="8.70" height="1.5" fill="#50504a"/><rect x="3.00" y="4" width="5.22" height="1.5" fill="#50504a"/><rect x="9.09" y="4" width="10.44" height="1.5" fill="#50504a"/><rect x="3.00" y="8" width="3.48" height="1.5" fill="#862046"/><rect x="7.35" y="8" width="8.70" height="1.5" fill="#77776f"/><rect x="16.92" y="8" width="5.22" height="1.5" fill="#862046"/><rect x="23.01" y="8" width="11.31" height="1.5" fill="#77776f"/><rect x="3.00" y="14" width="11.31" height="1.5" fill="#77776f"/><rect x="15.18" y="14" width="0.87" height="1.5" fill="#862046"/><rect x="16.92" y="14" width="0.87" height="1.5" fill="#77776f"/><rect x="6.48" y="16" width="6.09" height="1.5" fill="#7b7744"/><rect x="12.57" y="16" width="0.87" height="1.5" fill="#77776f"/><rect x="6.48" y="18" width="5.22" height="1.5" fill="#7b7744"/><rect x="11.70" y="18" width="0.87" height="1.5" fill="#77776f"/><rect x="6.48" y="20" width="6.96" height="1.5" fill="#7b7744"/><rect x="13.44" y="20" width="0.87" height="1.5" fill="#77776f"/><rect x="6.48" y="22" width="8.70" height="1.5" fill="#7b7744"/><rect x="15.18" y="22" width="0.87" height="1.5" fill="#77776f"/><rect x="3.00" y="24" width="0.87" height="1.5" fill="#77776f"/><rect x="3.00" y="28" width="16.53" height="1.5" fill="#77776f"/><rect x="20.40" y="28" width="0.87" height="1.5" fill="#862046"/><rect x="22.14" y="28" width="0.87" height="1.5" fill="#77776f"/><rect x="6.48" y="30" width="4.35" height="1.5" fill="#7b7744"/><rect x="10.83" y="30" width="0.87" height="1.5" fill="#77776f"/><rect x="6.48" y="32" width="4.35" height="1.5" fill="#7b7744"/><rect x="10.83" y="32" width="0.87" height="1.5" fill="#77776f"/><rect x="6.48" y="34" width="9.57" height="1.5" fill="#7b7744"/><rect x="16.05" y="34" width="0.87" height="1.5" fill="#77776f"/><rect x="6.48" y="36" width="7.83" height="1.5" fill="#7b7744"/><rect x="14.31" y="36" width="0.87" height="1.5" fill="#77776f"/><rect x="6.48" y="38" width="4.35" height="1.5" fill="#7b7744"/><rect x="10.83" y="38" width="0.87" height="1.5" fill="#77776f"/><rect x="6.48" y="40" width="6.09" height="1.5" fill="#7b7744"/><rect x="12.57" y="40" width="0.87" height="1.5" fill="#77776f"/><rect x="6.48" y="42" width="7.83" height="1.5" fill="#7b7744"/><rect x="14.31" y="42" width="0.87" height="1.5" fill="#77776f"/><rect x="3.00" y="46" width="0.87" height="1.5" fill="#77776f"/><rect x="3.00" y="50" width="18.27" height="1.5" fill="#77776f"/><rect x="22.14" y="50" width="0.87" height="1.5" fill="#862046"/><rect x="23.88" y="50" width="0.87" height="1.5" fill="#77776f"/><rect x="6.48" y="52" width="4.35" height="1.5" fill="#7b7744"/><rect x="10.83" y="52" width="0.87" height="1.5" fill="#77776f"/><rect x="6.48" y="54" width="7.83" height="1.5" fill="#7b7744"/><rect x="14.31" y="54" width="0.87" height="1.5" fill="#77776f"/><rect x="6.48" y="56" width="5.22" height="1.5" fill="#7b7744"/><rect x="11.70" y="56" width="0.87" height="1.5" fill="#77776f"/><rect x="3.00" y="58" width="0.87" height="1.5" fill="#77776f"/><rect x="3.00" y="62" width="12.18" height="1.5" fill="#77776f"/><rect x="16.05" y="62" width="0.87" height="1.5" fill="#862046"/><rect x="17.79" y="62" width="0.87" height="1.5" fill="#77776f"/><rect x="6.48" y="64" width="4.35" height="1.5" fill="#7b7744"/><rect x="10.83" y="64" width="0.87" height="1.5" fill="#77776f"/><rect x="6.48" y="66" width="4.35" height="1.5" fill="#7b7744"/><rect x="10.83" y="66" width="0.87" height="1.5" fill="#77776f"/><rect x="6.48" y="68" width="6.96" height="1.5" fill="#7b7744"/><rect x="13.44" y="68" width="0.87" height="1.5" fill="#77776f"/><rect x="3.00" y="70" width="0.87" height="1.5" fill="#77776f"/><rect x="3.00" y="76" width="12.18" height="1.5" fill="#77776f"/><rect x="16.05" y="76" width="0.87" height="1.5" fill="#862046"/><rect x="17.79" y="76" width="0.87" height="1.5" fill="#77776f"/><rect x="6.48" y="78" width="6.96" height="1.5" fill="#7b7744"/><rect x="13.44" y="78" width="0.87" height="1.5" fill="#77776f"/><rect x="6.48" y="80" width="4.35" height="1.5" fill="#7b7744"/><rect x="10.83" y="80" width="0.87" height="1.5" fill="#77776f"/><rect x="3.00" y="82" width="0.87" height="1.5" fill="#77776f"/><rect x="3.00" y="86" width="15.66" height="1.5" fill="#77776f"/><rect x="19.53" y="86" width="0.87" height="1.5" fill="#862046"/><rect x="21.27" y="86" width="0.87" height="1.5" fill="#77776f"/><rect x="6.48" y="88" width="5.22" height="1.5" fill="#7b7744"/><rect x="11.70" y="88" width="0.87" height="1.5" fill="#77776f"/><rect x="6.48" y="90" width="4.35" height="1.5" fill="#7b7744"/><rect x="10.83" y="90" width="0.87" height="1.5" fill="#77776f"/><rect x="6.48" y="92" width="7.83" height="1.5" fill="#7b7744"/><rect x="14.31" y="92" width="0.87" height="1.5" fill="#77776f"/><rect x="3.00" y="96" width="0.87" height="1.5" fill="#77776f"/><rect x="3.00" y="100" width="13.92" height="1.5" fill="#77776f"/><rect x="17.79" y="100" width="0.87" height="1.5" fill="#862046"/><rect x="19.53" y="100" width="0.87" height="1.5" fill="#77776f"/><rect x="6.48" y="102" width="6.96" height="1.5" fill="#7b7744"/><rect x="13.44" y="102" width="0.87" height="1.5" fill="#77776f"/><rect x="6.48" y="104" width="4.35" height="1.5" fill="#7b7744"/><rect x="10.83" y="104" width="0.87" height="1.5" fill="#77776f"/><rect x="6.48" y="106" width="9.57" height="1.5" fill="#7b7744"/><rect x="16.05" y="106" width="0.87" height="1.5" fill="#77776f"/><rect x="3.00" y="110" width="0.87" height="1.5" fill="#77776f"/><rect x="3.00" y="116" width="11.31" height="1.5" fill="#77776f"/><rect x="15.18" y="116" width="0.87" height="1.5" fill="#862046"/><rect x="16.92" y="116" width="0.87" height="1.5" fill="#77776f"/><rect x="6.48" y="118" width="7.83" height="1.5" fill="#7b7744"/><rect x="14.31" y="118" width="0.87" height="1.5" fill="#77776f"/><rect x="6.48" y="120" width="4.35" height="1.5" fill="#7b7744"/><rect x="10.83" y="120" width="0.87" height="1.5" fill="#77776f"/><rect x="6.48" y="122" width="5.22" height="1.5" fill="#7b7744"/><rect x="11.70" y="122" width="0.87" height="1.5" fill="#77776f"/><rect x="6.48" y="124" width="8.70" height="1.5" fill="#7b7744"/><rect x="15.18" y="124" width="0.87" height="1.5" fill="#77776f"/><rect x="3.00" y="126" width="0.87" height="1.5" fill="#77776f"/><rect x="3.00" y="130" width="10.44" height="1.5" fill="#77776f"/><rect x="14.31" y="130" width="0.87" height="1.5" fill="#862046"/><rect x="16.05" y="130" width="0.87" height="1.5" fill="#77776f"/><rect x="6.48" y="132" width="8.70" height="1.5" fill="#7b7744"/><rect x="15.18" y="132" width="0.87" height="1.5" fill="#77776f"/><rect x="6.48" y="134" width="7.83" height="1.5" fill="#7b7744"/><rect x="14.31" y="134" width="0.87" height="1.5" fill="#77776f"/><rect x="6.48" y="136" width="4.35" height="1.5" fill="#7b7744"/><rect x="10.83" y="136" width="0.87" height="1.5" fill="#77776f"/><rect x="3.00" y="138" width="0.87" height="1.5" fill="#77776f"/><rect x="3.00" y="142" width="11.31" height="1.5" fill="#77776f"/><rect x="15.18" y="142" width="0.87" height="1.5" fill="#862046"/><rect x="16.92" y="142" width="0.87" height="1.5" fill="#77776f"/><rect x="6.48" y="144" width="7.83" height="1.5" fill="#7b7744"/><rect x="14.31" y="144" width="0.87" height="1.5" fill="#77776f"/><rect x="6.48" y="146" width="7.83" height="1.5" fill="#7b7744"/><rect x="14.31" y="146" width="0.87" height="1.5" fill="#77776f"/><rect x="6.48" y="148" width="6.96" height="1.5" fill="#7b7744"/><rect x="13.44" y="148" width="0.87" height="1.5" fill="#77776f"/><rect x="6.48" y="150" width="4.35" height="1.5" fill="#7b7744"/><rect x="10.83" y="150" width="0.87" height="1.5" fill="#77776f"/><rect x="3.00" y="154" width="0.87" height="1.5" fill="#77776f"/><rect x="3.00" y="158" width="11.31" height="1.5" fill="#77776f"/><rect x="15.18" y="158" width="0.87" height="1.5" fill="#862046"/><rect x="16.92" y="158" width="0.87" height="1.5" fill="#77776f"/><rect x="6.48" y="160" width="5.22" height="1.5" fill="#7b7744"/><rect x="11.70" y="160" width="0.87" height="1.5" fill="#77776f"/><rect x="6.48" y="162" width="4.35" height="1.5" fill="#7b7744"/><rect x="10.83" y="162" width="0.87" height="1.5" fill="#77776f"/><rect x="6.48" y="164" width="7.83" height="1.5" fill="#7b7744"/><rect x="14.31" y="164" width="0.87" height="1.5" fill="#77776f"/><rect x="6.48" y="166" width="9.57" height="1.5" fill="#7b7744"/><rect x="16.05" y="166" width="0.87" height="1.5" fill="#77776f"/><rect x="6.48" y="168" width="5.22" height="1.5" fill="#7b7744"/><rect x="11.70" y="168" width="0.87" height="1.5" fill="#77776f"/><rect x="6.48" y="170" width="6.09" height="1.5" fill="#7b7744"/><rect x="12.57" y="170" width="0.87" height="1.5" fill="#77776f"/><rect x="3.00" y="172" width="0.87" height="1.5" fill="#77776f"/><rect x="3.00" y="176" width="9.57" height="1.5" fill="#77776f"/><rect x="13.44" y="176" width="0.87" height="1.5" fill="#862046"/><rect x="15.18" y="176" width="0.87" height="1.5" fill="#77776f"/><rect x="6.48" y="178" width="6.96" height="1.5" fill="#7b7744"/><rect x="13.44" y="178" width="0.87" height="1.5" fill="#77776f"/><rect x="6.48" y="180" width="5.22" height="1.5" fill="#7b7744"/><rect x="11.70" y="180" width="0.87" height="1.5" fill="#77776f"/><rect x="6.48" y="182" width="7.83" height="1.5" fill="#7b7744"/><rect x="14.31" y="182" width="0.87" height="1.5" fill="#77776f"/><rect x="6.48" y="184" width="4.35" height="1.5" fill="#7b7744"/><rect x="10.83" y="184" width="0.87" height="1.5" fill="#77776f"/><rect x="6.48" y="186" width="7.83" height="1.5" fill="#7b7744"/><rect x="14.31" y="186" width="0.87" height="1.5" fill="#77776f"/><rect x="6.48" y="188" width="6.09" height="1.5" fill="#7b7744"/><rect x="12.57" y="188" width="0.87" height="1.5" fill="#77776f"/><rect x="6.48" y="190" width="7.83" height="1.5" fill="#7b7744"/><rect x="14.31" y="190" width="0.87" height="1.5" fill="#77776f"/><rect x="6.48" y="192" width="9.57" height="1.5" fill="#7b7744"/><rect x="16.05" y="192" width="0.87" height="1.5" fill="#77776f"/><rect x="6.48" y="194" width="8.70" height="1.5" fill="#7b7744"/><rect x="15.18" y="194" width="0.87" height="1.5" fill="#77776f"/><rect x="6.48" y="196" width="5.22" height="1.5" fill="#7b7744"/><rect x="11.70" y="196" width="0.87" height="1.5" fill="#77776f"/><rect x="3.00" y="198" width="0.87" height="1.5" fill="#77776f"/><rect x="3.00" y="202" width="9.57" height="1.5" fill="#77776f"/><rect x="13.44" y="202" width="0.87" height="1.5" fill="#862046"/><rect x="15.18" y="202" width="0.87" height="1.5" fill="#77776f"/><rect x="6.48" y="204" width="4.35" height="1.5" fill="#7b7744"/><rect x="10.83" y="204" width="0.87" height="1.5" fill="#77776f"/><rect x="6.48" y="206" width="7.83" height="1.5" fill="#7b7744"/><rect x="14.31" y="206" width="0.87" height="1.5" fill="#77776f"/><rect x="6.48" y="208" width="7.83" height="1.5" fill="#7b7744"/><rect x="14.31" y="208" width="0.87" height="1.5" fill="#77776f"/><rect x="6.48" y="210" width="8.70" height="1.5" fill="#7b7744"/><rect x="15.18" y="210" width="0.87" height="1.5" fill="#77776f"/><rect x="3.00" y="214" width="0.87" height="1.5" fill="#77776f"/><rect x="3.00" y="218" width="10.44" height="1.5" fill="#77776f"/><rect x="14.31" y="218" width="0.87" height="1.5" fill="#862046"/><rect x="16.05" y="218" width="0.87" height="1.5" fill="#77776f"/><rect x="6.48" y="220" width="5.22" height="1.5" fill="#7b7744"/><rect x="11.70" y="220" width="0.87" height="1.5" fill="#77776f"/><rect x="6.48" y="222" width="6.09" height="1.5" fill="#7b7744"/><rect x="12.57" y="222" width="0.87" height="1.5" fill="#77776f"/><rect x="6.48" y="224" width="4.35" height="1.5" fill="#7b7744"/><rect x="10.83" y="224" width="0.87" height="1.5" fill="#77776f"/><rect x="6.48" y="226" width="7.83" height="1.5" fill="#7b7744"/><rect x="14.31" y="226" width="0.87" height="1.5" fill="#77776f"/><rect x="6.48" y="228" width="8.70" height="1.5" fill="#7b7744"/><rect x="15.18" y="228" width="0.87" height="1.5" fill="#77776f"/><rect x="6.48" y="230" width="4.35" height="1.5" fill="#7b7744"/><rect x="10.83" y="230" width="0.87" height="1.5" fill="#77776f"/><rect x="6.48" y="232" width="7.83" height="1.5" fill="#7b7744"/><rect x="14.31" y="232" width="0.87" height="1.5" fill="#77776f"/><rect x="3.00" y="234" width="0.87" height="1.5" fill="#77776f"/><rect x="3.00" y="238" width="14.79" height="1.5" fill="#77776f"/><rect x="18.66" y="238" width="0.87" height="1.5" fill="#862046"/><rect x="20.40" y="238" width="0.87" height="1.5" fill="#77776f"/><rect x="6.48" y="240" width="4.35" height="1.5" fill="#7b7744"/><rect x="10.83" y="240" width="0.87" height="1.5" fill="#77776f"/><rect x="6.48" y="242" width="7.83" height="1.5" fill="#7b7744"/><rect x="14.31" y="242" width="0.87" height="1.5" fill="#77776f"/><rect x="6.48" y="244" width="5.22" height="1.5" fill="#7b7744"/><rect x="11.70" y="244" width="0.87" height="1.5" fill="#77776f"/><rect x="3.00" y="246" width="0.87" height="1.5" fill="#77776f"/><rect x="3.00" y="252" width="10.44" height="1.5" fill="#77776f"/><rect x="14.31" y="252" width="0.87" height="1.5" fill="#862046"/><rect x="16.05" y="252" width="0.87" height="1.5" fill="#77776f"/><rect x="6.48" y="254" width="6.96" height="1.5" fill="#7b7744"/><rect x="13.44" y="254" width="0.87" height="1.5" fill="#77776f"/><rect x="6.48" y="256" width="8.70" height="1.5" fill="#7b7744"/><rect x="15.18" y="256" width="0.87" height="1.5" fill="#77776f"/><rect x="6.48" y="258" width="7.83" height="1.5" fill="#7b7744"/><rect x="14.31" y="258" width="0.87" height="1.5" fill="#77776f"/><rect x="6.48" y="260" width="6.96" height="1.5" fill="#7b7744"/><rect x="13.44" y="260" width="0.87" height="1.5" fill="#77776f"/><rect x="6.48" y="262" width="9.57" height="1.5" fill="#7b7744"/><rect x="16.05" y="262" width="0.87" height="1.5" fill="#77776f"/><rect x="6.48" y="264" width="6.09" height="1.5" fill="#7b7744"/><rect x="12.57" y="264" width="0.87" height="1.5" fill="#77776f"/><rect x="6.48" y="266" width="6.96" height="1.5" fill="#7b7744"/><rect x="13.44" y="266" width="0.87" height="1.5" fill="#77776f"/><rect x="3.00" y="268" width="0.87" height="1.5" fill="#77776f"/><rect x="3.00" y="278" width="1.74" height="1.5" fill="#50504a"/><rect x="4.74" y="278" width="67.86" height="1.5" fill="#50504a"/><rect x="3.00" y="280" width="26.10" height="1.5" fill="#50504a"/><rect x="3.00" y="282" width="14.79" height="1.5" fill="#77776f"/><rect x="18.66" y="282" width="0.87" height="1.5" fill="#862046"/><rect x="20.40" y="282" width="13.92" height="1.5" fill="#7b7744"/><rect x="3.00" y="286" width="34.80" height="1.5" fill="#50504a"/><rect x="3.00" y="290" width="1.74" height="1.5" fill="#50504a"/><rect x="4.74" y="290" width="21.75" height="1.5" fill="#50504a"/><rect x="3.00" y="294" width="17.40" height="1.5" fill="#50504a"/><rect x="22.14" y="294" width="43.50" height="1.5" fill="#50504a"/><rect x="22.14" y="296" width="43.50" height="1.5" fill="#50504a"/><rect x="22.14" y="298" width="22.62" height="1.5" fill="#50504a"/><rect x="3.00" y="302" width="30.45" height="1.5" fill="#50504a"/><rect x="3.00" y="306" width="8.70" height="1.5" fill="#77776f"/><rect x="12.57" y="306" width="0.87" height="1.5" fill="#862046"/><rect x="14.31" y="306" width="11.31" height="1.5" fill="#77776f"/><rect x="25.62" y="306" width="0.87" height="1.5" fill="#77776f"/><rect x="26.49" y="306" width="10.44" height="1.5" fill="#7b7744"/><rect x="36.93" y="306" width="1.74" height="1.5" fill="#77776f"/><rect x="6.48" y="308" width="7.83" height="1.5" fill="#77776f"/><rect x="14.31" y="308" width="10.44" height="1.5" fill="#7b7744"/><rect x="24.75" y="308" width="1.74" height="1.5" fill="#77776f"/><rect x="6.48" y="310" width="10.44" height="1.5" fill="#77776f"/><rect x="16.92" y="310" width="12.18" height="1.5" fill="#7b7744"/><rect x="29.10" y="310" width="1.74" height="1.5" fill="#77776f"/><rect x="6.48" y="312" width="6.96" height="1.5" fill="#77776f"/><rect x="3.00" y="316" width="8.70" height="1.5" fill="#77776f"/><rect x="12.57" y="316" width="0.87" height="1.5" fill="#862046"/><rect x="14.31" y="316" width="11.31" height="1.5" fill="#77776f"/><rect x="25.62" y="316" width="0.87" height="1.5" fill="#77776f"/><rect x="26.49" y="316" width="10.44" height="1.5" fill="#7b7744"/><rect x="36.93" y="316" width="1.74" height="1.5" fill="#77776f"/><rect x="6.48" y="318" width="7.83" height="1.5" fill="#77776f"/><rect x="14.31" y="318" width="10.44" height="1.5" fill="#7b7744"/><rect x="24.75" y="318" width="1.74" height="1.5" fill="#77776f"/><rect x="6.48" y="320" width="10.44" height="1.5" fill="#77776f"/><rect x="16.92" y="320" width="12.18" height="1.5" fill="#7b7744"/><rect x="29.10" y="320" width="1.74" height="1.5" fill="#77776f"/><rect x="6.48" y="322" width="6.96" height="1.5" fill="#77776f"/><rect x="3.00" y="326" width="13.92" height="1.5" fill="#77776f"/><rect x="17.79" y="326" width="0.87" height="1.5" fill="#862046"/><rect x="19.53" y="326" width="11.31" height="1.5" fill="#77776f"/><rect x="30.84" y="326" width="0.87" height="1.5" fill="#77776f"/><rect x="31.71" y="326" width="10.44" height="1.5" fill="#7b7744"/><rect x="42.15" y="326" width="1.74" height="1.5" fill="#77776f"/><rect x="6.48" y="328" width="7.83" height="1.5" fill="#77776f"/><rect x="14.31" y="328" width="12.18" height="1.5" fill="#7b7744"/><rect x="26.49" y="328" width="1.74" height="1.5" fill="#77776f"/><rect x="6.48" y="330" width="6.96" height="1.5" fill="#77776f"/><rect x="3.00" y="334" width="10.44" height="1.5" fill="#77776f"/><rect x="14.31" y="334" width="0.87" height="1.5" fill="#862046"/><rect x="16.05" y="334" width="11.31" height="1.5" fill="#77776f"/><rect x="27.36" y="334" width="0.87" height="1.5" fill="#77776f"/><rect x="28.23" y="334" width="10.44" height="1.5" fill="#7b7744"/><rect x="38.67" y="334" width="1.74" height="1.5" fill="#77776f"/><rect x="6.48" y="336" width="7.83" height="1.5" fill="#77776f"/><rect x="14.31" y="336" width="12.18" height="1.5" fill="#7b7744"/><rect x="26.49" y="336" width="1.74" height="1.5" fill="#77776f"/><rect x="6.48" y="338" width="6.96" height="1.5" fill="#77776f"/><rect x="3.00" y="342" width="19.14" height="1.5" fill="#77776f"/><rect x="23.01" y="342" width="0.87" height="1.5" fill="#862046"/><rect x="24.75" y="342" width="12.18" height="1.5" fill="#77776f"/><rect x="36.93" y="342" width="19.14" height="1.5" fill="#7b7744"/><rect x="56.07" y="342" width="1.74" height="1.5" fill="#77776f"/><rect x="6.48" y="344" width="7.83" height="1.5" fill="#77776f"/><rect x="14.31" y="344" width="15.66" height="1.5" fill="#7b7744"/><rect x="29.97" y="344" width="1.74" height="1.5" fill="#77776f"/><rect x="6.48" y="346" width="7.83" height="1.5" fill="#77776f"/><rect x="14.31" y="346" width="15.66" height="1.5" fill="#7b7744"/><rect x="29.97" y="346" width="1.74" height="1.5" fill="#77776f"/><rect x="6.48" y="348" width="6.96" height="1.5" fill="#77776f"/><rect x="3.00" y="352" width="19.14" height="1.5" fill="#77776f"/><rect x="23.01" y="352" width="0.87" height="1.5" fill="#862046"/><rect x="24.75" y="352" width="12.18" height="1.5" fill="#77776f"/><rect x="36.93" y="352" width="19.14" height="1.5" fill="#7b7744"/><rect x="56.07" y="352" width="1.74" height="1.5" fill="#77776f"/><rect x="6.48" y="354" width="7.83" height="1.5" fill="#77776f"/><rect x="14.31" y="354" width="12.18" height="1.5" fill="#7b7744"/><rect x="26.49" y="354" width="1.74" height="1.5" fill="#77776f"/><rect x="6.48" y="356" width="6.96" height="1.5" fill="#77776f"/><rect x="3.00" y="360" width="17.40" height="1.5" fill="#77776f"/><rect x="21.27" y="360" width="0.87" height="1.5" fill="#862046"/><rect x="23.01" y="360" width="12.18" height="1.5" fill="#77776f"/><rect x="35.19" y="360" width="17.40" height="1.5" fill="#7b7744"/><rect x="52.59" y="360" width="1.74" height="1.5" fill="#77776f"/><rect x="6.48" y="362" width="7.83" height="1.5" fill="#77776f"/><rect x="14.31" y="362" width="10.44" height="1.5" fill="#7b7744"/><rect x="24.75" y="362" width="1.74" height="1.5" fill="#77776f"/><rect x="6.48" y="364" width="6.96" height="1.5" fill="#77776f"/><rect x="3.00" y="368" width="19.14" height="1.5" fill="#77776f"/><rect x="23.01" y="368" width="0.87" height="1.5" fill="#862046"/><rect x="24.75" y="368" width="12.18" height="1.5" fill="#77776f"/><rect x="36.93" y="368" width="19.14" height="1.5" fill="#7b7744"/><rect x="56.07" y="368" width="1.74" height="1.5" fill="#77776f"/><rect x="6.48" y="370" width="7.83" height="1.5" fill="#77776f"/><rect x="14.31" y="370" width="18.27" height="1.5" fill="#7b7744"/><rect x="32.58" y="370" width="1.74" height="1.5" fill="#77776f"/><rect x="6.48" y="372" width="7.83" height="1.5" fill="#77776f"/><rect x="14.31" y="372" width="12.18" height="1.5" fill="#7b7744"/><rect x="26.49" y="372" width="1.74" height="1.5" fill="#77776f"/><rect x="6.48" y="374" width="10.44" height="1.5" fill="#77776f"/><rect x="16.92" y="374" width="10.44" height="1.5" fill="#7b7744"/><rect x="27.36" y="374" width="1.74" height="1.5" fill="#77776f"/><rect x="6.48" y="376" width="6.96" height="1.5" fill="#77776f"/><rect x="3.00" y="380" width="19.14" height="1.5" fill="#77776f"/><rect x="23.01" y="380" width="0.87" height="1.5" fill="#862046"/><rect x="24.75" y="380" width="12.18" height="1.5" fill="#77776f"/><rect x="36.93" y="380" width="19.14" height="1.5" fill="#7b7744"/><rect x="56.07" y="380" width="1.74" height="1.5" fill="#77776f"/><rect x="6.48" y="382" width="7.83" height="1.5" fill="#77776f"/><rect x="14.31" y="382" width="18.27" height="1.5" fill="#7b7744"/><rect x="32.58" y="382" width="1.74" height="1.5" fill="#77776f"/><rect x="6.48" y="384" width="7.83" height="1.5" fill="#77776f"/><rect x="14.31" y="384" width="12.18" height="1.5" fill="#7b7744"/><rect x="26.49" y="384" width="1.74" height="1.5" fill="#77776f"/><rect x="6.48" y="386" width="10.44" height="1.5" fill="#77776f"/><rect x="16.92" y="386" width="9.57" height="1.5" fill="#7b7744"/><rect x="26.49" y="386" width="1.74" height="1.5" fill="#77776f"/><rect x="6.48" y="388" width="6.96" height="1.5" fill="#77776f"/><rect x="3.00" y="392" width="18.27" height="1.5" fill="#77776f"/><rect x="22.14" y="392" width="0.87" height="1.5" fill="#862046"/><rect x="23.88" y="392" width="12.18" height="1.5" fill="#77776f"/><rect x="36.06" y="392" width="18.27" height="1.5" fill="#7b7744"/><rect x="54.33" y="392" width="1.74" height="1.5" fill="#77776f"/><rect x="6.48" y="394" width="7.83" height="1.5" fill="#77776f"/><rect x="14.31" y="394" width="20.01" height="1.5" fill="#7b7744"/><rect x="34.32" y="394" width="1.74" height="1.5" fill="#77776f"/><rect x="6.48" y="396" width="7.83" height="1.5" fill="#77776f"/><rect x="14.31" y="396" width="10.44" height="1.5" fill="#7b7744"/><rect x="24.75" y="396" width="1.74" height="1.5" fill="#77776f"/><rect x="6.48" y="398" width="10.44" height="1.5" fill="#77776f"/><rect x="16.92" y="398" width="11.31" height="1.5" fill="#7b7744"/><rect x="28.23" y="398" width="1.74" height="1.5" fill="#77776f"/><rect x="6.48" y="400" width="6.96" height="1.5" fill="#77776f"/><rect x="3.00" y="406" width="20.01" height="1.5" fill="#77776f"/><rect x="23.88" y="406" width="0.87" height="1.5" fill="#862046"/><rect x="25.62" y="406" width="12.18" height="1.5" fill="#77776f"/><rect x="37.80" y="406" width="20.01" height="1.5" fill="#7b7744"/><rect x="57.81" y="406" width="1.74" height="1.5" fill="#77776f"/><rect x="6.48" y="408" width="7.83" height="1.5" fill="#77776f"/><rect x="14.31" y="408" width="20.01" height="1.5" fill="#7b7744"/><rect x="34.32" y="408" width="1.74" height="1.5" fill="#77776f"/><rect x="6.48" y="410" width="7.83" height="1.5" fill="#77776f"/><rect x="14.31" y="410" width="9.57" height="1.5" fill="#7b7744"/><rect x="23.88" y="410" width="1.74" height="1.5" fill="#77776f"/><rect x="6.48" y="412" width="10.44" height="1.5" fill="#77776f"/><rect x="16.92" y="412" width="9.57" height="1.5" fill="#7b7744"/><rect x="26.49" y="412" width="1.74" height="1.5" fill="#77776f"/><rect x="6.48" y="414" width="6.96" height="1.5" fill="#77776f"/><rect x="3.00" y="420" width="18.27" height="1.5" fill="#77776f"/><rect x="22.14" y="420" width="0.87" height="1.5" fill="#862046"/><rect x="23.88" y="420" width="11.31" height="1.5" fill="#77776f"/><rect x="35.19" y="420" width="0.87" height="1.5" fill="#77776f"/><rect x="36.06" y="420" width="19.14" height="1.5" fill="#7b7744"/><rect x="55.20" y="420" width="1.74" height="1.5" fill="#77776f"/><rect x="6.48" y="422" width="7.83" height="1.5" fill="#77776f"/><rect x="14.31" y="422" width="19.14" height="1.5" fill="#7b7744"/><rect x="33.45" y="422" width="1.74" height="1.5" fill="#77776f"/><rect x="6.48" y="424" width="7.83" height="1.5" fill="#77776f"/><rect x="14.31" y="424" width="10.44" height="1.5" fill="#7b7744"/><rect x="24.75" y="424" width="1.74" height="1.5" fill="#77776f"/><rect x="6.48" y="426" width="6.96" height="1.5" fill="#77776f"/><rect x="3.00" y="430" width="19.14" height="1.5" fill="#77776f"/><rect x="23.01" y="430" width="0.87" height="1.5" fill="#862046"/><rect x="24.75" y="430" width="11.31" height="1.5" fill="#77776f"/><rect x="36.06" y="430" width="0.87" height="1.5" fill="#77776f"/><rect x="36.93" y="430" width="20.88" height="1.5" fill="#7b7744"/><rect x="57.81" y="430" width="1.74" height="1.5" fill="#77776f"/><rect x="6.48" y="432" width="7.83" height="1.5" fill="#77776f"/><rect x="14.31" y="432" width="19.14" height="1.5" fill="#7b7744"/><rect x="33.45" y="432" width="1.74" height="1.5" fill="#77776f"/><rect x="6.48" y="434" width="7.83" height="1.5" fill="#77776f"/><rect x="14.31" y="434" width="10.44" height="1.5" fill="#7b7744"/><rect x="24.75" y="434" width="1.74" height="1.5" fill="#77776f"/><rect x="6.48" y="436" width="6.96" height="1.5" fill="#77776f"/><rect x="3.00" y="440" width="21.75" height="1.5" fill="#77776f"/><rect x="25.62" y="440" width="0.87" height="1.5" fill="#862046"/><rect x="27.36" y="440" width="11.31" height="1.5" fill="#77776f"/><rect x="38.67" y="440" width="0.87" height="1.5" fill="#77776f"/><rect x="39.54" y="440" width="24.36" height="1.5" fill="#7b7744"/><rect x="63.90" y="440" width="1.74" height="1.5" fill="#77776f"/><rect x="6.48" y="442" width="7.83" height="1.5" fill="#77776f"/><rect x="14.31" y="442" width="19.14" height="1.5" fill="#7b7744"/><rect x="33.45" y="442" width="1.74" height="1.5" fill="#77776f"/><rect x="6.48" y="444" width="7.83" height="1.5" fill="#77776f"/><rect x="14.31" y="444" width="12.18" height="1.5" fill="#7b7744"/><rect x="26.49" y="444" width="1.74" height="1.5" fill="#77776f"/><rect x="6.48" y="446" width="6.96" height="1.5" fill="#77776f"/><rect x="3.00" y="454" width="13.92" height="1.5" fill="#50504a"/><rect x="3.00" y="456" width="6.09" height="1.5" fill="#77776f"/><rect x="9.96" y="456" width="0.87" height="1.5" fill="#862046"/><rect x="11.70" y="456" width="0.87" height="1.5" fill="#77776f"/><rect x="6.48" y="458" width="10.44" height="1.5" fill="#7b7744"/><rect x="16.92" y="458" width="1.74" height="1.5" fill="#77776f"/><rect x="19.53" y="458" width="10.44" height="1.5" fill="#77776f"/><rect x="6.48" y="460" width="12.18" height="1.5" fill="#7b7744"/><rect x="18.66" y="460" width="1.74" height="1.5" fill="#77776f"/><rect x="21.27" y="460" width="14.79" height="1.5" fill="#77776f"/><rect x="6.48" y="462" width="8.70" height="1.5" fill="#7b7744"/><rect x="15.18" y="462" width="1.74" height="1.5" fill="#77776f"/><rect x="17.79" y="462" width="8.70" height="1.5" fill="#77776f"/><rect x="6.48" y="464" width="13.92" height="1.5" fill="#7b7744"/><rect x="20.40" y="464" width="1.74" height="1.5" fill="#77776f"/><rect x="23.01" y="464" width="12.18" height="1.5" fill="#77776f"/><rect x="6.48" y="466" width="14.79" height="1.5" fill="#7b7744"/><rect x="21.27" y="466" width="1.74" height="1.5" fill="#77776f"/><rect x="23.88" y="466" width="11.31" height="1.5" fill="#77776f"/><rect x="6.48" y="468" width="10.44" height="1.5" fill="#7b7744"/><rect x="16.92" y="468" width="1.74" height="1.5" fill="#77776f"/><rect x="19.53" y="468" width="14.79" height="1.5" fill="#77776f"/><rect x="6.48" y="470" width="14.79" height="1.5" fill="#7b7744"/><rect x="21.27" y="470" width="1.74" height="1.5" fill="#77776f"/><rect x="23.88" y="470" width="14.79" height="1.5" fill="#77776f"/><rect x="6.48" y="472" width="13.05" height="1.5" fill="#7b7744"/><rect x="19.53" y="472" width="1.74" height="1.5" fill="#77776f"/><rect x="22.14" y="472" width="10.44" height="1.5" fill="#77776f"/><rect x="6.48" y="474" width="10.44" height="1.5" fill="#7b7744"/><rect x="16.92" y="474" width="1.74" height="1.5" fill="#77776f"/><rect x="19.53" y="474" width="10.44" height="1.5" fill="#77776f"/><rect x="6.48" y="476" width="14.79" height="1.5" fill="#7b7744"/><rect x="21.27" y="476" width="1.74" height="1.5" fill="#77776f"/><rect x="23.88" y="476" width="13.92" height="1.5" fill="#77776f"/><rect x="6.48" y="478" width="7.83" height="1.5" fill="#7b7744"/><rect x="14.31" y="478" width="1.74" height="1.5" fill="#77776f"/><rect x="16.92" y="478" width="9.57" height="1.5" fill="#77776f"/><rect x="6.48" y="480" width="9.57" height="1.5" fill="#7b7744"/><rect x="16.05" y="480" width="1.74" height="1.5" fill="#77776f"/><rect x="18.66" y="480" width="8.70" height="1.5" fill="#77776f"/><rect x="6.48" y="482" width="11.31" height="1.5" fill="#7b7744"/><rect x="17.79" y="482" width="1.74" height="1.5" fill="#77776f"/><rect x="20.40" y="482" width="8.70" height="1.5" fill="#77776f"/><rect x="6.48" y="484" width="11.31" height="1.5" fill="#7b7744"/><rect x="17.79" y="484" width="1.74" height="1.5" fill="#77776f"/><rect x="20.40" y="484" width="14.79" height="1.5" fill="#77776f"/><rect x="6.48" y="486" width="13.05" height="1.5" fill="#7b7744"/><rect x="19.53" y="486" width="1.74" height="1.5" fill="#77776f"/><rect x="22.14" y="486" width="13.92" height="1.5" fill="#77776f"/><rect x="3.00" y="490" width="0.87" height="1.5" fill="#77776f"/><rect x="3.00" y="494" width="31.32" height="1.5" fill="#50504a"/><rect x="3.00" y="496" width="17.40" height="1.5" fill="#50504a"/><rect x="22.14" y="496" width="22.62" height="1.5" fill="#50504a"/><rect x="3.00" y="498" width="17.40" height="1.5" fill="#50504a"/><rect x="3.00" y="500" width="26.10" height="1.5" fill="#50504a"/><rect x="3.00" y="502" width="16.53" height="1.5" fill="#77776f"/><rect x="20.40" y="502" width="0.87" height="1.5" fill="#862046"/><rect x="22.14" y="502" width="16.53" height="1.5" fill="#77776f"/><rect x="3.00" y="506" width="8.70" height="1.5" fill="#77776f"/><rect x="12.57" y="506" width="0.87" height="1.5" fill="#862046"/><rect x="14.31" y="506" width="112.69" height="1.5" fill="#77776f"/></svg>
<div id="vscol"></div>
<div class="thumbv" style="left:2536px;top:902px;width:16px;height:126px"></div>
<div id="bottom"></div>
<div class="abs" style="left:471px;top:1363px;width:2px;height:32px;background:#4b4b4b"></div>
<div class="abs" style="left:0;top:1363px;width:439px;height:1px;background:#0e0e0e"></div>
<div class="thumbh" style="left:8px;top:1371px;width:367px;height:16px"></div>
<div class="thumbh" style="left:481px;top:1371px;width:923px;height:16px"></div>
<div id="status"></div>
<div class="abs" style="left:2171px;top:1399px;width:1px;height:41px;background:#474747"></div>
<div class="abs" style="left:2172px;top:1399px;width:2px;height:41px;background:#7a7a7a"></div>
<div class="abs" style="left:2362px;top:1399px;width:2px;height:41px;background:#7a7a7a"></div>
<svg style="left:18px;top:1407px" width="28" height="24" viewBox="0 0 28 24"><rect x="3" y="2.5" width="22" height="19" stroke="#c4c4c4" stroke-width="2.2" fill="none"/><rect x="3" y="14" width="22" height="2.2" fill="#c4c4c4"/></svg>
<span class="t" style="left:61.62px;top:1408.00px;font-family:'Liberation Sans';font-size:23px;color:#f2f2f2;transform:scaleX(0.9955);">Line 3, Column 1</span>
<span class="t" style="left:2217.61px;top:1408.00px;font-family:'Liberation Sans';font-size:23px;color:#f2f2f2;transform:scaleX(0.9476);">Spaces: 4</span>
<span class="t" style="left:2419.06px;top:1408.00px;font-family:'Liberation Sans';font-size:23px;color:#f2f2f2;transform:scaleX(1.0297);">Python</span>
</body></html>
